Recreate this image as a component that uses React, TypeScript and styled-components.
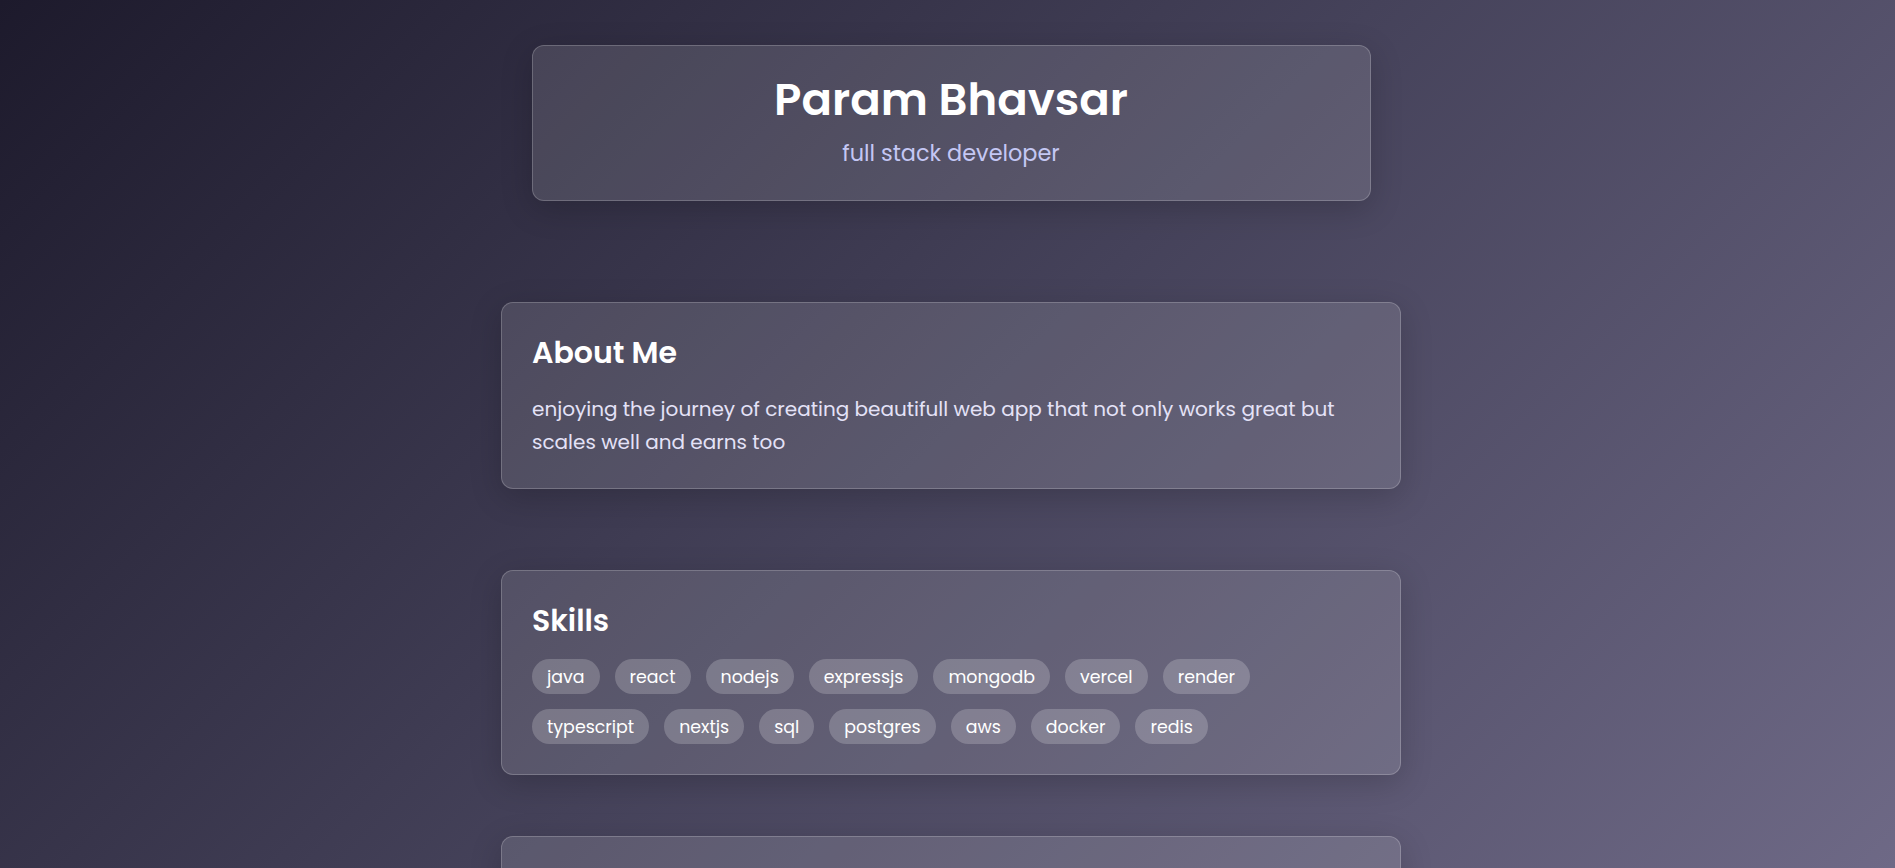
import React from "react";
import styled, { createGlobalStyle } from "styled-components";

const GlobalStyle = createGlobalStyle`
  html, body {
    margin: 0;
    padding: 0;
  }
  body {
    min-height: 100vh;
    font-family: "Poppins", "Inter", "Noto Sans", sans-serif;
    background: linear-gradient(135deg, #1d1a2c 0%, #45425a 50%, #6e6986 100%) fixed;
    color: #ffffff;
  }
`;

const Page = styled.main`
  display: flex;
  flex-direction: column;
  align-items: center;
  padding: 45px 0 0 7px;
`;

const HeaderCard = styled.header`
  box-sizing: border-box;
  width: 839px;
  height: 156px;
  padding-bottom: 4px;
  display: flex;
  flex-direction: column;
  align-items: center;
  justify-content: center;
  gap: 11px;
  background: rgba(255, 255, 255, 0.12);
  border: 1px solid rgba(255, 255, 255, 0.2);
  border-radius: 12px;
  box-shadow: 0 8px 32px rgba(0, 0, 0, 0.18);
  margin-bottom: 101px;
`;

const Name = styled.h1`
  margin: 0;
  font-size: 45px;
  font-weight: 600;
  line-height: 54px;
  color: #ffffff;
`;

const Role = styled.p`
  margin: 0;
  font-size: 22.4px;
  font-weight: 400;
  line-height: 31px;
  color: #c4c7f4;
`;

const Card = styled.section<{ $gap: number; $minHeight?: number }>`
  box-sizing: border-box;
  width: 900px;
  min-height: ${(p) => (p.$minHeight ? `${p.$minHeight}px` : "auto")};
  padding: 32px 30px 30px;
  background: rgba(255, 255, 255, 0.12);
  border: 1px solid rgba(255, 255, 255, 0.2);
  border-radius: 12px;
  box-shadow: 0 8px 32px rgba(0, 0, 0, 0.18);
  margin-bottom: ${(p) => p.$gap}px;
`;

const Heading = styled.h2`
  margin: 0 0 23px;
  font-size: 30px;
  font-weight: 600;
  line-height: 35px;
  color: #ffffff;
`;

const Text = styled.p`
  margin: 0;
  font-size: 20px;
  line-height: 32.5px;
  color: #e4e2f7;
`;

const TagList = styled.div`
  display: flex;
  flex-direction: column;
  gap: 15px;
  margin-top: -2px;
`;

const TagRow = styled.ul`
  list-style: none;
  margin: 0;
  padding: 0;
  display: flex;
  gap: 15px;
`;

const Tag = styled.li`
  height: 35px;
  padding: 0 15px;
  display: flex;
  align-items: center;
  border-radius: 18px;
  background: rgba(255, 255, 255, 0.2);
  font-size: 17.4px;
  color: #ffffff;
`;

const skillRows = [
  ["java", "react", "nodejs", "expressjs", "mongodb", "vercel", "render"],
  ["typescript", "nextjs", "sql", "postgres", "aws", "docker", "redis"],
];

export default function App() {
  return (
    <>
      <GlobalStyle />
      <Page>
        <HeaderCard>
          <Name>Param Bhavsar</Name>
          <Role>full stack developer</Role>
        </HeaderCard>

        <Card $gap={81}>
          <Heading>About Me</Heading>
          <Text>
            enjoying the journey of creating beautifull web app that not only works great but
            <br />
            scales well and earns too
          </Text>
        </Card>

        <Card $gap={61}>
          <Heading>Skills</Heading>
          <TagList>
            {skillRows.map((row, i) => (
              <TagRow key={i}>
                {row.map((s) => (
                  <Tag key={s}>{s}</Tag>
                ))}
              </TagRow>
            ))}
          </TagList>
        </Card>

        <Card $gap={40} $minHeight={160} aria-hidden="true" />
      </Page>
    </>
  );
}
